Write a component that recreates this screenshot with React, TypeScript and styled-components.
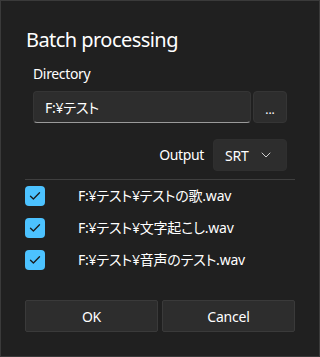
import React from "react";
import styled, { createGlobalStyle } from "styled-components";

const Global = createGlobalStyle`
  html, body { margin: 0; padding: 0; background: #202020; }
  * { box-sizing: border-box; }
  body { font-family: "Noto Sans", "Noto Sans CJK JP", sans-serif; }
`;

const Dialog = styled.div`
  width: 320px;
  height: 357px;
  background: #202020;
  border: 1px solid #3a3a3a;
  padding: 0 24px;
  display: flex;
  flex-direction: column;
  color: #ffffff;
  font-family: "Noto Sans", "Noto Sans CJK JP", sans-serif;
  font-feature-settings: "palt";
`;

const Title = styled.h1`
  margin: 25px 0 0 1px;
  font-size: 20px;
  font-weight: 400;
  line-height: 28px;
  letter-spacing: -0.55px;
`;

const Section = styled.div`
  padding: 0 8px;
  display: flex;
  flex-direction: column;
`;

const Label = styled.div`
  margin-top: 10px;
  font-size: 14px;
  line-height: 20px;
  letter-spacing: -0.35px;
`;

const InputRow = styled.div`
  display: flex;
  gap: 2px;
  margin-top: 7px;
  height: 32px;
`;

const TextBox = styled.div`
  flex: 1;
  background: #2d2d2d;
  border: 1px solid #353535;
  border-bottom: 1px solid #9a9a9a;
  border-radius: 4px;
  display: flex;
  align-items: center;
  padding-left: 11px;
  font-size: 14px;
  letter-spacing: -0.2px;
`;

const SmallButton = styled.div`
  width: 34px;
  background: #2d2d2d;
  border: 1px solid #353535;
  border-radius: 4px;
  display: flex;
  align-items: center;
  justify-content: center;
  font-size: 12px;
  padding-top: 4px;
`;

const OutputRow = styled.div`
  display: flex;
  justify-content: flex-end;
  align-items: center;
  gap: 9px;
  margin-top: 16px;
  height: 32px;
`;

const OutputLabel = styled.span`
  font-size: 14px;
  line-height: 20px;
  letter-spacing: -0.35px;
`;

const Combo = styled.div`
  width: 74px;
  height: 32px;
  background: #2d2d2d;
  border: 1px solid #2f2f2f;
  border-radius: 4px;
  display: flex;
  align-items: center;
  justify-content: space-between;
  padding: 0 15px 0 11px;
  font-size: 14px;
  letter-spacing: -0.2px;
`;

const Divider = styled.div`
  height: 1px;
  background: #3f3f3f;
  margin-top: 8px;
`;

const FileList = styled.div`
  display: flex;
  flex-direction: column;
`;

const FileRow = styled.div`
  height: 32px;
  display: flex;
  align-items: center;
`;

const Check = styled.div`
  width: 20px;
  height: 20px;
  border-radius: 4px;
  background: #4cc2ff;
  display: flex;
  align-items: center;
  justify-content: center;
  margin-right: 33px;
  flex-shrink: 0;
`;

const FileName = styled.span`
  font-size: 14px;
  line-height: 20px;
  letter-spacing: -0.2px;
`;

const Footer = styled.div`
  display: grid;
  grid-template-columns: 1fr 1fr;
  gap: 4px;
  margin-top: 24px;
`;

const Button = styled.div`
  height: 32px;
  background: #2d2d2d;
  border: 1px solid #3a3a3a;
  border-radius: 2px;
  display: flex;
  align-items: center;
  justify-content: center;
  font-size: 14px;
  letter-spacing: -0.2px;
`;

const CheckIcon = () => (
  <svg width="12" height="10" viewBox="0 0 12 10">
    <path d="M1.5 5.2 L4.4 8 L10.5 1.8" fill="none" stroke="#1a1a1a" strokeWidth="1.3" strokeLinecap="round" strokeLinejoin="round" />
  </svg>
);

const Chevron = () => (
  <svg width="10" height="6" viewBox="0 0 10 6">
    <path d="M1 1 L5 5 L9 1" fill="none" stroke="#cfcfcf" strokeWidth="1" strokeLinecap="round" strokeLinejoin="round" />
  </svg>
);

const files = [
  "F:¥テスト¥テストの歌.wav",
  "F:¥テスト¥文字起こし.wav",
  "F:¥テスト¥音声のテスト.wav",
];

export default function App() {
  return (
    <>
      <Global />
      <Dialog>
        <Title>Batch processing</Title>
        <Section>
          <Label>Directory</Label>
          <InputRow>
            <TextBox>F:¥テスト</TextBox>
            <SmallButton>...</SmallButton>
          </InputRow>
          <OutputRow>
            <OutputLabel>Output</OutputLabel>
            <Combo>
              <span>SRT</span>
              <Chevron />
            </Combo>
          </OutputRow>
        </Section>
        <Divider />
        <FileList>
          {files.map((f) => (
            <FileRow key={f}>
              <Check>
                <CheckIcon />
              </Check>
              <FileName>{f}</FileName>
            </FileRow>
          ))}
        </FileList>
        <Footer>
          <Button>OK</Button>
          <Button>Cancel</Button>
        </Footer>
      </Dialog>
    </>
  );
}
